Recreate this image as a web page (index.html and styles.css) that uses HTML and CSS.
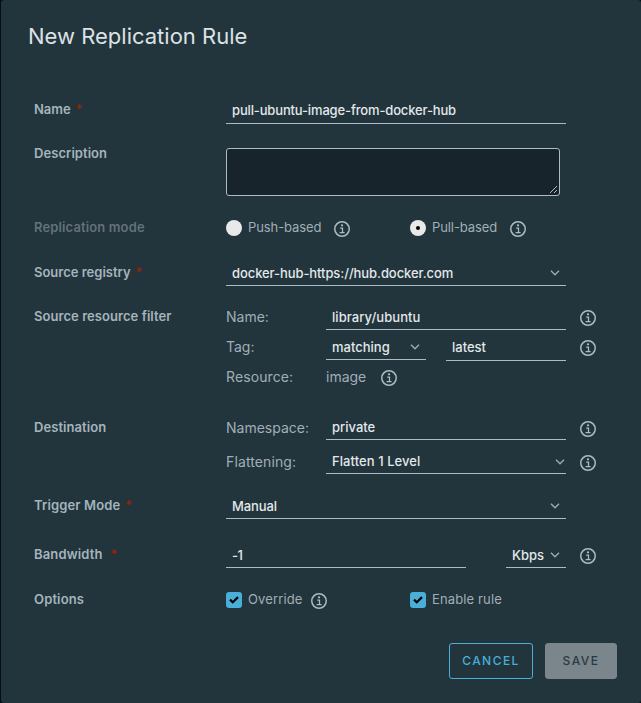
FILE: index.html
```
<!DOCTYPE html>
<html lang="en">
<head>
<meta charset="utf-8">
<title>New Replication Rule</title>
<link rel="stylesheet" href="styles.css">
</head>
<body>
<svg class="sprite" aria-hidden="true">
  <symbol id="info" viewBox="0 0 16 16"><circle cx="8" cy="8" r="7.25" fill="none" stroke="currentColor" stroke-width="1.5"/><circle cx="8" cy="4.3" r="1.15" fill="currentColor"/><path d="M6.2 7.1H8.5V11.6M5.6 11.7H10.6" fill="none" stroke="currentColor" stroke-width="1.25"/></symbol>
  <symbol id="chevron" viewBox="0 0 10 6"><path d="M1 .8 5 4.8 9 .8" fill="none" stroke="currentColor" stroke-width="1.3"/></symbol>
  <symbol id="check" viewBox="0 0 16 16"><path d="M4 7.6 6.8 10.3 12 5.1" fill="none" stroke="#000" stroke-width="2.2"/></symbol>
</svg>
<main class="modal">
  <h1 class="title">New Replication Rule</h1>
  <form class="form">
    <div class="label t-name">Name<i class="req">*</i></div>
    <div class="controls"><div class="field tall w340 v-pull">pull-ubuntu-image-from-docker-hub</div></div>

    <div class="label">Description</div>
    <div class="controls"><div class="textarea"><svg class="grip" viewBox="0 0 9 9"><path d="M1 8 8 1M5 8 8 5" fill="none" stroke="#c5cdd1" stroke-width=".9"/></svg></div></div>

    <div class="label muted">Replication mode</div>
    <div class="controls options">
      <div class="option"><span class="radio"></span><span class="o-push">Push-based</span><svg class="info gap13"><use href="#info"/></svg></div>
      <div class="option"><span class="radio on"></span><span class="o-push">Pull-based</span><svg class="info gap13"><use href="#info"/></svg></div>
    </div>

    <div class="label t-reg">Source registry<i class="req">*</i></div>
    <div class="controls"><div class="field w340 select v-hub">docker-hub-https://hub.docker.com<svg class="chevron"><use href="#chevron"/></svg></div></div>

    <div class="label">Source resource filter</div>
    <div class="controls stack">
      <div class="line"><span class="sub">Name:</span><div class="field w240 v-lib">library/ubuntu</div><svg class="info end"><use href="#info"/></svg></div>
      <div class="line"><span class="sub">Tag:</span><div class="field w100 select">matching<svg class="chevron"><use href="#chevron"/></svg></div><div class="field tall w120">latest</div><svg class="info end"><use href="#info"/></svg></div>
      <div class="line"><span class="sub s-res">Resource:</span><span class="plain">image</span><svg class="info end"><use href="#info"/></svg></div>
    </div>

    <div class="label">Destination</div>
    <div class="controls stack spaced">
      <div class="line"><span class="sub">Namespace:</span><div class="field short w240">private</div><svg class="info end"><use href="#info"/></svg></div>
      <div class="line"><span class="sub s-flat">Flattening:</span><div class="field short w240 select near v-lib">Flatten 1 Level<svg class="chevron"><use href="#chevron"/></svg></div><svg class="info end"><use href="#info"/></svg></div>
    </div>

    <div class="label t-wide">Trigger Mode<i class="req">*</i></div>
    <div class="controls"><div class="field w340 select v-man">Manual<svg class="chevron"><use href="#chevron"/></svg></div></div>

    <div class="label t-wide">Bandwidth<i class="req far">*</i></div>
    <div class="controls line"><div class="field w240 v-one">-1</div><div class="field w60 select">Kbps<svg class="chevron"><use href="#chevron"/></svg></div><svg class="info end"><use href="#info"/></svg></div>

    <div class="label t-wide">Options</div>
    <div class="controls options">
      <div class="option"><svg class="checkbox"><use href="#check"/></svg><span class="o-over">Override</span><svg class="info gap8"><use href="#info"/></svg></div>
      <div class="option"><svg class="checkbox"><use href="#check"/></svg><span class="o-over">Enable rule</span></div>
    </div>
  </form>
  <footer class="footer"><button class="btn cancel">CANCEL</button><button class="btn save">SAVE</button></footer>
</main>
</body>
</html>
```
FILE: styles.css
```
* { box-sizing: border-box; }
body { margin: 0; background: #070d10; font-family: Inter, "Open Sans", sans-serif; font-size: 13px; color: #adbbc4; }
.sprite { position: absolute; width: 0; height: 0; }
.modal { width: 640px; height: 703px; margin-left: 1px; background: #22343c; border-radius: 3px; padding: 22px 24px 0 33px; overflow: hidden; }
.title { margin: 0 0 0 -6px; height: 76px; font-size: 22px; line-height: 29px; font-weight: 400; color: #dde2e5; white-space: nowrap; }
.form { display: grid; grid-template-columns: 192px 1fr; grid-template-rows: 44px 74px 45px 44px 111px 78px 49px 45px 55px; }
.label { display: flex; height: 24px; line-height: 23px; font-weight: 600; white-space: nowrap; letter-spacing: .06px; color: #a5b4bc; }
.t-name, .t-reg { letter-spacing: 0; }
.t-wide { letter-spacing: .14px; }
.muted { color: #62727a; letter-spacing: .13px; }
.req { margin-left: 5px; font-style: normal; font-weight: 400; color: #a32100; }
.far { margin-left: 8px; }
.controls { display: flex; }
.field { display: flex; flex: none; height: 25px; line-height: 24px; padding: 0 6px; border-bottom: 1px solid #adbbc4; color: #e3e8eb; font-weight: 500; white-space: nowrap; }
.v-pull { letter-spacing: -.15px; }
.v-hub { letter-spacing: -.08px; }
.v-lib { letter-spacing: .07px; }
.v-man { letter-spacing: -.12px; }
.v-one { letter-spacing: -.5px; }
.tall { height: 26px; line-height: 25px; }
.short { height: 24px; line-height: 22px; }
.select { justify-content: space-between; }
.w340 { width: 340px; }
.w240 { width: 240px; }
.w120 { width: 120px; margin-left: 20px; }
.w100 { width: 100px; }
.w60 { width: 60px; margin-left: 40px; }
.chevron { flex: none; width: 10px; height: 6px; margin-top: 9px; color: #a3adb2; }
.near { padding-right: 1px; }
.textarea { display: flex; align-items: flex-end; justify-content: flex-end; width: 334px; height: 48px; margin-top: 6px; padding: 1px; border: 1px solid #adbbc4; border-radius: 3px; background: #17242b; }
.grip { width: 9px; height: 9px; }
.options { height: 24px; }
.option { display: flex; width: 184px; line-height: 23px; white-space: nowrap; color: #a0afb7; }
.o-push { letter-spacing: -.1px; }
.o-over { letter-spacing: .13px; }
.radio { display: flex; align-items: center; justify-content: center; flex: none; width: 16px; height: 16px; margin: 4px 6px 0 0; border-radius: 50%; background: #e9e9e9; }
.on::after { content: ""; width: 4px; height: 4px; border-radius: 50%; background: #000; }
.checkbox { flex: none; width: 16px; height: 16px; margin: 4px 6px 0 0; border-radius: 3px; background: #49afd9; }
.info { flex: none; width: 16px; height: 16px; margin-top: 5px; color: #adbbc4; }
.gap13 { margin-left: 13px; }
.gap8 { margin-left: 8px; }
.end { margin-left: 14px; }
.stack { flex-direction: column; }
.line { display: flex; height: 30px; }
.spaced .line { height: 34px; }
.sub { width: 100px; flex: none; font-size: 14px; line-height: 24px; color: #a0afb7; }
.s-res { letter-spacing: .1px; }
.s-flat { letter-spacing: .12px; }
.plain { width: 41px; font-size: 14px; line-height: 24px; color: #a0afb7; }
.footer { display: flex; justify-content: flex-end; gap: 12px; }
.btn { height: 36px; padding: 0; border: 1px solid #49afd9; border-radius: 3px; background: none; font: 500 12px/34px Inter, sans-serif; letter-spacing: 1.45px; }
.cancel { width: 84px; color: #49afd9; }
.save { width: 72px; border-color: #7a868b; background: #7a868b; color: #2a3a42; }
```
